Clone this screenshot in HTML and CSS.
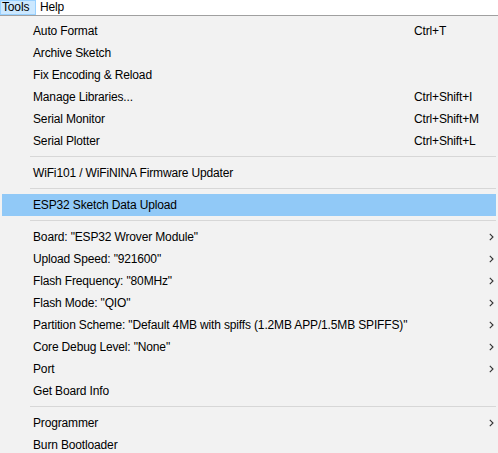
FILE: index.html
```html
<!DOCTYPE html>
<html>
<head>
<meta charset="utf-8">
<link rel="stylesheet" href="styles.css">
</head>
<body>
<div class="menubar">
  <span class="mb-item active">Tools</span>
  <span class="mb-item">Help</span>
</div>
<div class="menu">
  <div class="item"><span class="label">Auto Format</span><span class="key">Ctrl+T</span><span></span></div>
  <div class="item"><span class="label">Archive Sketch</span><span class="key"></span><span></span></div>
  <div class="item"><span class="label">Fix Encoding &amp; Reload</span><span class="key"></span><span></span></div>
  <div class="item"><span class="label">Manage Libraries...</span><span class="key">Ctrl+Shift+I</span><span></span></div>
  <div class="item"><span class="label">Serial Monitor</span><span class="key">Ctrl+Shift+M</span><span></span></div>
  <div class="item"><span class="label">Serial Plotter</span><span class="key">Ctrl+Shift+L</span><span></span></div>
  <div class="sep"></div>
  <div class="item"><span class="label">WiFi101 / WiFiNINA Firmware Updater</span><span class="key"></span><span></span></div>
  <div class="sep"></div>
  <div class="item selected"><span class="label">ESP32 Sketch Data Upload</span><span class="key"></span><span></span></div>
  <div class="sep"></div>
  <div class="item"><span class="label">Board: "ESP32 Wrover Module"</span><span class="key"></span><svg class="arrow" width="5" height="8" viewBox="0 0 5 8"><polyline points="0.8,0.8 4,4 0.8,7.2" fill="none" stroke="#333" stroke-width="1.1"/></svg></div>
  <div class="item"><span class="label">Upload Speed: "921600"</span><span class="key"></span><svg class="arrow" width="5" height="8" viewBox="0 0 5 8"><polyline points="0.8,0.8 4,4 0.8,7.2" fill="none" stroke="#333" stroke-width="1.1"/></svg></div>
  <div class="item"><span class="label">Flash Frequency: "80MHz"</span><span class="key"></span><svg class="arrow" width="5" height="8" viewBox="0 0 5 8"><polyline points="0.8,0.8 4,4 0.8,7.2" fill="none" stroke="#333" stroke-width="1.1"/></svg></div>
  <div class="item"><span class="label">Flash Mode: "QIO"</span><span class="key"></span><svg class="arrow" width="5" height="8" viewBox="0 0 5 8"><polyline points="0.8,0.8 4,4 0.8,7.2" fill="none" stroke="#333" stroke-width="1.1"/></svg></div>
  <div class="item"><span class="label">Partition Scheme: "Default 4MB with spiffs (1.2MB APP/1.5MB SPIFFS)"</span><span class="key"></span><svg class="arrow" width="5" height="8" viewBox="0 0 5 8"><polyline points="0.8,0.8 4,4 0.8,7.2" fill="none" stroke="#333" stroke-width="1.1"/></svg></div>
  <div class="item"><span class="label">Core Debug Level: "None"</span><span class="key"></span><svg class="arrow" width="5" height="8" viewBox="0 0 5 8"><polyline points="0.8,0.8 4,4 0.8,7.2" fill="none" stroke="#333" stroke-width="1.1"/></svg></div>
  <div class="item"><span class="label">Port</span><span class="key"></span><svg class="arrow" width="5" height="8" viewBox="0 0 5 8"><polyline points="0.8,0.8 4,4 0.8,7.2" fill="none" stroke="#333" stroke-width="1.1"/></svg></div>
  <div class="item"><span class="label">Get Board Info</span><span class="key"></span><span></span></div>
  <div class="sep"></div>
  <div class="item"><span class="label">Programmer</span><span class="key"></span><svg class="arrow" width="5" height="8" viewBox="0 0 5 8"><polyline points="0.8,0.8 4,4 0.8,7.2" fill="none" stroke="#333" stroke-width="1.1"/></svg></div>
  <div class="item"><span class="label">Burn Bootloader</span><span class="key"></span><span></span></div>
</div>
</body>
</html>
```

FILE: styles.css
```css
html, body {
  margin: 0;
  padding: 0;
  background: #f2f2f2;
  width: 498px;
  height: 453px;
  overflow: hidden;
}
body {
  font-family: "Liberation Sans", Arial, sans-serif;
  font-size: 12px;
  letter-spacing: -0.15px;
  color: #000;
}
.menubar {
  display: flex;
  height: 15px;
  background: #fff;
  border-bottom: 1px solid #a0a0a0;
}
.mb-item {
  display: flex;
  align-items: center;
  padding: 0 5px 0 2px;
  line-height: 15px;
  box-sizing: border-box;
  border: 1px solid transparent;
}
.mb-item.active {
  background: #cce8ff;
  border-color: #99d1ff;
  padding: 0 1px 0 1px;
  width: 36px;
}
.mb-item + .mb-item {
  padding-left: 3px;
}
.menu {
  padding-top: 4px;
  background: #f2f2f2;
}
.item {
  display: grid;
  grid-template-columns: minmax(0, 1fr) 68px 14px;
  align-items: center;
  height: 22px;
  margin: 0 2px;
  padding-left: 31px;
  white-space: nowrap;
}
.label {
  overflow: visible;
  white-space: nowrap;
}
.item.selected {
  background: #91c9f7;
}
.key {
  white-space: nowrap;
}
.arrow {
  display: block;
  margin-left: 7px;
}
.sep {
  height: 10px;
  box-sizing: border-box;
  padding-top: 4px;
  margin-left: 30px;
  margin-right: 2px;
}
.sep::before {
  content: "";
  display: block;
  height: 1px;
  background: #d7d7d7;
}
```
